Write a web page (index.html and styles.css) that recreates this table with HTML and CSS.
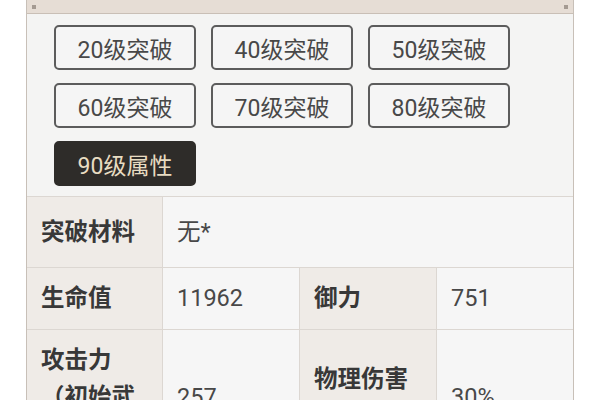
FILE: index.html
```html
<!DOCTYPE html>
<html lang="zh">
<head>
<meta charset="utf-8">
<link rel="stylesheet" href="styles.css">
</head>
<body>
<div class="panel">
  <div class="topbar"><span class="dot"></span><span class="dot"></span></div>
  <div class="tabs">
    <div class="tab">20级突破</div>
    <div class="tab">40级突破</div>
    <div class="tab">50级突破</div>
    <div class="tab">60级突破</div>
    <div class="tab">70级突破</div>
    <div class="tab">80级突破</div>
    <div class="tab active">90级属性</div>
  </div>
  <div class="table">
    <div class="cell head tall">突破材料</div>
    <div class="cell val tall span3">无*</div>
    <div class="cell head">生命值</div>
    <div class="cell val">11962</div>
    <div class="cell head">御力</div>
    <div class="cell val">751</div>
    <div class="cell head">攻击力（初始武器）</div>
    <div class="cell val">257</div>
    <div class="cell head">物理伤害加成</div>
    <div class="cell val">30%</div>
  </div>
</div>
</body>
</html>
```
FILE: styles.css
```css
html, body {
  margin: 0;
  padding: 0;
  background: #ffffff;
}
body {
  font-family: Roboto, "Noto Sans CJK SC", sans-serif;
}
.panel {
  margin: 0 26px;
  width: 546px;
  border-left: 1px solid #c8c0b8;
  border-right: 1px solid #c8c0b8;
  background: #f4f4f3;
  min-height: 400px;
}
.topbar {
  height: 13px;
  background: #e6ddd5;
  border-bottom: 1px solid #c9bfb6;
  display: flex;
  justify-content: space-between;
  align-items: center;
  padding: 0 5px;
}
.dot {
  width: 4px;
  height: 4px;
  background: #a49a92;
}
.tabs {
  display: grid;
  grid-template-columns: repeat(3, 142px);
  column-gap: 15px;
  row-gap: 13px;
  padding: 11px 27px 10px;
  border-bottom: 1px solid #dcd7d2;
}
.tab {
  box-sizing: border-box;
  height: 45px;
  border: 2px solid #5c5c5c;
  border-radius: 5px;
  background: #f5f5f5;
  color: #484848;
  font-size: 23px;
  display: flex;
  align-items: center;
  justify-content: center;
}
.tab.active {
  background: #2e2c29;
  border-color: #2e2c29;
  color: #e8dcc2;
}
.table {
  display: grid;
  grid-template-columns: 136px 137px 137px 136px;
}
.cell {
  box-sizing: border-box;
  padding: 12px 14px;
  line-height: 37px;
  font-size: 23.5px;
  border-bottom: 1px solid #dcd7d2;
  border-right: 1px solid #dcd7d2;
  display: flex;
  align-items: center;
}
.cell:nth-child(4n+2), .cell.span3 {
  border-right: none;
}
.cell.val:last-child {
  border-right: none;
}
.head {
  background: #efebe7;
  color: #383838;
  font-weight: 700;
}
.val {
  background: #f6f6f6;
  color: #484848;
}
.tall {
  min-height: 71px;
}
.span3 {
  grid-column: span 3;
}
```
